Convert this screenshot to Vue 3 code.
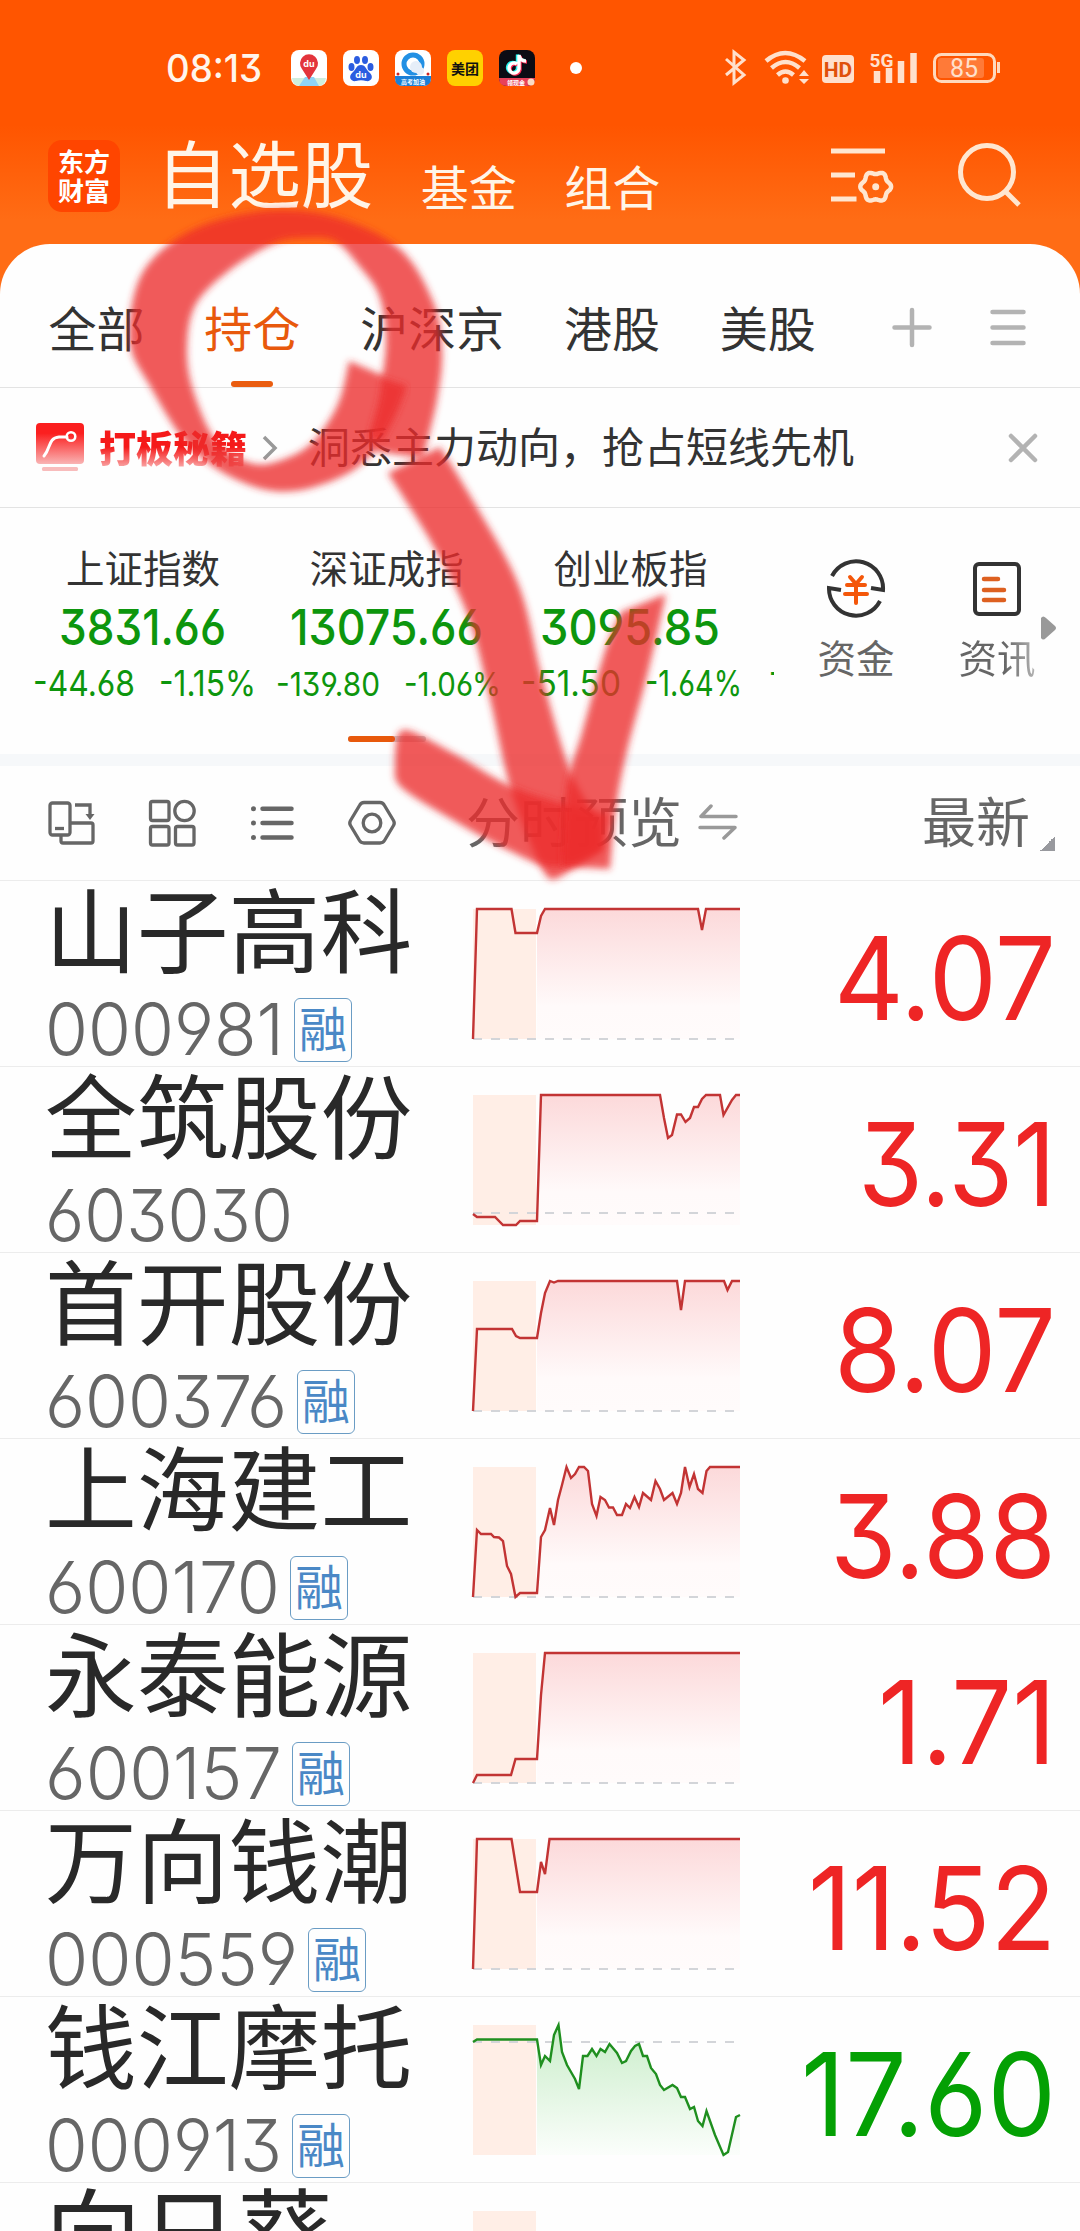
<template>
  <div class="page">
    <header class="header">
      <div class="status">
        <FitText class="clock" text="08:13" :width="96" :size="38" :weight="500" />
        <div class="apps">
          <svg viewBox="0 0 36 36">
            <rect width="36" height="36" rx="8" fill="#fff" />
            <path d="M1 28h34q-1 8-8 8H9q-7 0-8-8z" fill="#cfeedd" />
            <path d="M14 27h9l5 9H8z" fill="#8fd3f5" />
            <path d="M18 30 11 19a9 9 0 1 1 14 0z" fill="#e3343c" />
            <text x="18" y="17" class="du" fill="#fff">du</text>
          </svg>
          <svg viewBox="0 0 36 36">
            <rect width="36" height="36" rx="8" fill="#fff" />
            <g fill="#2b5ce0">
              <ellipse cx="8.500" cy="17" rx="3" ry="4" />
              <ellipse cx="14" cy="10" rx="3" ry="4" />
              <ellipse cx="22" cy="10" rx="3" ry="4" />
              <ellipse cx="27.500" cy="17" rx="3" ry="4" />
              <path d="M18 15c5 0 5 5 9 8 4 4 1 9-4 8-3-1-7-1-10 0-5 1-8-4-4-8 4-3 4-8 9-8z" />
            </g>
            <text x="18" y="28" class="du" fill="#fff">du</text>
          </svg>
          <svg viewBox="0 0 36 36">
            <rect width="36" height="36" rx="8" fill="#fff" />
            <path d="M0 26h36v2q0 8-8 8H8q-8 0-8-8z" fill="#1a7fd6" />
            <circle cx="18" cy="14" r="9" fill="none" stroke="#2290e4" stroke-width="5" />
            <circle cx="21" cy="17" r="6" fill="#e6eef8" />
            <circle cx="25" cy="21" r="4" fill="#e6eef8" />
            <circle cx="3" cy="24" r="1.500" fill="#c22" />
            <circle cx="33" cy="24" r="1.500" fill="#c22" />
            <text x="18" y="34" class="tiny">高考加油</text>
          </svg>
          <svg viewBox="0 0 36 36">
            <rect width="36" height="36" rx="8" fill="#ffd100" />
            <text x="18" y="23.500" class="meituan">美团</text>
          </svg>
          <svg viewBox="0 0 36 36">
            <rect width="36" height="36" rx="8" fill="#0c0c14" />
            <g fill="none" stroke-width="3.400">
              <path d="M18 14a5 5 0 1 0 2 5V5q1 6 7 6" stroke="#25f4ee" transform="translate(-1.500 -.5)" />
              <path d="M18 14a5 5 0 1 0 2 5V5q1 6 7 6" stroke="#fe2c55" transform="translate(1 1)" />
              <path d="M18 14a5 5 0 1 0 2 5V5q1 6 7 6" stroke="#fff" />
            </g>
            <path d="M0 28h36q0 8-8 8H8q-8 0-8-8z" fill="#e8415a" />
            <text x="17" y="34.500" class="tiny">领现金</text>
            <circle cx="32" cy="32" r="3.500" fill="#fbdcc4" />
          </svg>
        </div>
        <span class="dot"></span>
        <svg class="system" viewBox="725 50 276 36">
          <path d="m726 59 18 16-10 8V52l10 8-18 15" fill="none" stroke="#ffe0cc" stroke-width="3" />
          <g fill="none" stroke="#ffe0cc" stroke-width="4.500">
            <path d="M766 61q19-16 39 0M771.500 68q14-12 28 0M777.500 75q8-7 16 0" />
          </g>
          <circle cx="785.500" cy="80.500" r="3.300" fill="#ffe0cc" />
          <path d="m804 70 5 6h-10zm0 14 5-5h-10z" fill="#ffe0cc" />
          <rect x="822" y="55" width="32" height="28" rx="4" fill="#ffe0cc" />
          <text x="838" y="76.500" class="hd">HD</text>
          <text x="881.500" y="67" class="fiveg">5G</text>
          <path d="M877 71v12M889 68v15M901 61v22M913.500 53v30" stroke="#ffe0cc" stroke-width="6.500" />
          <rect x="934.500" y="54.500" width="60" height="27" rx="7" fill="none" stroke="#ffd9bd" stroke-width="3" />
          <rect x="938" y="58" width="46" height="20" rx="3" fill="#ff7a38" />
          <path d="M998.500 62v11" stroke="#ffd9bd" stroke-width="3" />
          <text x="964" y="77" class="battery">85</text>
        </svg>
      </div>
      <nav class="top">
        <div class="logo"><span>东方</span><span>财富</span></div>
        <h1>自选股</h1>
        <span class="link">基金</span>
        <span class="link">组合</span>
        <svg class="tools" viewBox="831 144 190 66" fill="none" stroke="#ffe6d0" stroke-width="5">
          <path d="M831 152h54M831 176h24M831 200h25.500" />
          <path :d="gear" stroke-width="4.500" stroke-linejoin="round" />
          <circle cx="875.700" cy="187.700" r="3.500" fill="#ffe6d0" stroke="none" />
          <circle cx="987" cy="173" r="26.500" />
          <path d="m1005 192 14 14" />
        </svg>
      </nav>
    </header>

    <main class="sheet">
      <nav class="tabs">
        <span v-for="tab in tabs" :key="tab" :class="{ active: tab === '持仓' }">{{ tab }}</span>
        <svg class="tab-tools" viewBox="892 307 136 41" stroke="#b3b3b3" stroke-width="4.500" stroke-linecap="round">
          <path d="M894.500 327.500h35M912 310v35M992.500 312h31M992.500 327.500h31M992.500 343h31" />
        </svg>
      </nav>

      <section class="notice">
        <svg class="promo" viewBox="0 0 48 50">
          <defs>
            <linearGradient id="promo" x2="0" y2="1">
              <stop offset=".25" stop-color="#fb1f1f" />
              <stop offset="1" stop-color="#f9b4b4" />
            </linearGradient>
          </defs>
          <rect width="48" height="41" rx="4" fill="url(#promo)" />
          <path d="M8 33c7-8 4-18 15-19h8" fill="none" stroke="#fff" stroke-width="3" stroke-linecap="round" />
          <circle cx="35" cy="13.500" r="4.300" fill="none" stroke="#fff" stroke-width="2.500" />
          <rect x="6" y="44" width="36" height="4" rx="1.500" fill="#f8bcbc" />
        </svg>
        <b>打板秘籍</b>
        <svg class="chevron" viewBox="0 0 16 28"><path d="m2 3 11 11L2 25" fill="none" stroke="#999" stroke-width="3.500" /></svg>
        <span>洞悉主力动向，抢占短线先机</span>
        <svg class="close" viewBox="0 0 30 30"><path d="m3 3 24 24M27 3 3 27" stroke="#b3b3b3" stroke-width="4.500" stroke-linecap="round" /></svg>
      </section>

      <section class="market">
        <div class="indices">
          <div v-for="item in indices" :key="item.name" class="index">
            <span>{{ item.name }}</span>
            <FitText :text="item.value" :width="item.width" :size="50" :weight="550" />
            <div class="change">
              <FitText :text="item.diff" :width="item.diffWidth" :size="item.size" />
              <FitText :text="item.rate" :width="97" :size="item.size" />
            </div>
          </div>
          <i class="more">-</i>
        </div>
        <div class="shortcuts">
          <div class="shortcut">
            <svg viewBox="0 0 60 60" fill="none" stroke="#333" stroke-width="4">
              <path d="M6 17a27 27 0 0 1 51 14l-12-2M54 42A27 27 0 0 1 3 29l12 2" />
              <path d="m24 18 6 7 6-7M21 26h18M19 35h22M30 26v18" stroke="#f4570a" stroke-linecap="round" />
            </svg>
            <span>资金</span>
          </div>
          <div class="shortcut">
            <svg viewBox="0 0 60 60" fill="none" stroke="#333" stroke-width="4">
              <rect x="8" y="5" width="44" height="50" rx="4" />
              <path d="M17 20h14M17 31h20M17 41h20" stroke="#dd6020" stroke-width="4.500" stroke-linecap="round" />
            </svg>
            <span class="fade">资讯</span>
          </div>
        </div>
        <svg class="next" viewBox="0 0 15 24"><path d="M0 2q2-3 5 0l9 8q2 2 0 4l-9 8q-3 3-5 0z" fill="#999" /></svg>
        <div class="pager"><i></i></div>
      </section>

      <section class="toolbar">
        <svg class="views" viewBox="47 799 350 49" fill="none" stroke="#666" stroke-width="3.300">
          <path d="M61 836v5q0 2 2 2h28q2 0 2-2v-16q0-2-2-2H71M75 805h15v10" />
          <rect x="50" y="803" width="20" height="32" rx="2.500" />
          <path d="M55 828.500h9" />
          <path d="m85.500 814 9 0-4.500 6z" fill="#666" stroke="none" />
          <rect x="150.500" y="801.500" width="18.500" height="19" rx="2" />
          <circle cx="184.500" cy="811" r="9.700" />
          <rect x="150.500" y="826.500" width="18.500" height="18.500" rx="2" />
          <rect x="175.500" y="826.500" width="18.500" height="18.500" rx="2" />
          <path d="M262.500 808.700h29M262.500 823h29M262.500 837.500h29" stroke-width="4.500" stroke-linecap="round" />
          <path d="M253.500 808.700h.01M253.500 823h.01M253.500 837.500h.01" stroke-width="5" stroke-linecap="round" />
          <path d="M364 802.500h16q3 0 4.500 3l9 15q1.500 2.500 0 5l-9 15q-1.500 2.500-4.500 2.500h-16q-3 0-4.500-2.500l-9-15q-1.500-2.500 0-5l9-15q1.500-3 4.500-3z" />
          <circle cx="372" cy="823" r="8.800" />
        </svg>
        <span class="preview">分时预览</span>
        <svg class="swap" viewBox="0 0 40 36"><path d="M13 2 3 12.500h35M2 23.500h35L26 34" fill="none" stroke="#999" stroke-width="3.500" stroke-linecap="round" stroke-linejoin="round" /></svg>
        <span class="latest">最新</span>
        <i class="corner"></i>
      </section>

      <section class="stocks">
        <article v-for="stock in stocks" :key="stock.name" class="stock">
          <div class="info">
            <h2 :class="{ short: stock.name.length < 4 }">{{ stock.name }}</h2>
            <div v-if="stock.code" class="code">
              <FitText :text="stock.code" :width="stock.codeWidth" :size="72" :weight="320" />
              <em v-if="stock.margin">融</em>
            </div>
          </div>
          <svg class="chart" :class="{ down: stock.down }" viewBox="0 0 267 130">
            <defs>
              <linearGradient id="up" gradientUnits="userSpaceOnUse" x1="0" y1="0" x2="0" y2="130">
                <stop offset="0" stop-color="#fcd9da" />
                <stop offset=".75" stop-color="#fffafa" />
                <stop offset="1" stop-color="#fffbfb" />
              </linearGradient>
              <linearGradient id="down" gradientUnits="userSpaceOnUse" x1="0" y1="0" x2="0" y2="130">
                <stop offset="0" stop-color="#c9edc9" />
                <stop offset="1" stop-color="#fbfefb" />
              </linearGradient>
            </defs>
            <rect width="63" height="130" fill="#ffeee6" />
            <template v-if="stock.line">
              <path :d="area(stock.line)" :fill="stock.down ? 'url(#down)' : 'url(#up)'" />
              <path :d="`M0 ${stock.base}H261`" stroke="#d3d5d9" stroke-width="2" stroke-dasharray="9 9" />
              <polyline :points="stock.line" />
            </template>
          </svg>
          <FitText
            v-if="stock.price"
            class="price"
            :class="{ down: stock.down }"
            :text="stock.price"
            :width="stock.priceWidth"
            :size="115"
            :weight="380"
          />
        </article>
      </section>
    </main>

    <svg class="marks" viewBox="0 0 1080 2231">
      <defs>
        <filter id="soft" x="-10%" y="-10%" width="120%" height="120%"><feGaussianBlur stdDeviation="3.500" /></filter>
      </defs>
      <path v-for="mark in marks" :key="mark" :d="mark" filter="url(#soft)" />
    </svg>
  </div>
</template>

<script setup>
import { h } from 'vue'

// digits squeezed to a given width
const FitText = ({ text, width, size, weight = 400 }) =>
  h('svg', { width, height: size, viewBox: `0 0 ${width} ${size}`, overflow: 'visible' }, [
    h('text', {
      x: 0,
      y: size * 0.86,
      textLength: width,
      lengthAdjust: 'spacingAndGlyphs',
      fill: 'currentColor',
      'font-family': 'Inter, "Noto Sans", sans-serif',
      'font-size': size,
      'font-weight': weight
    }, text)
  ])
FitText.props = ['text', 'width', 'size', 'weight']

const tabs = ['全部', '持仓', '沪深京', '港股', '美股']

const indices = [
  { name: '上证指数', value: '3831.66', width: 167, diff: '-44.68', diffWidth: 102, rate: '-1.15%', size: 36 },
  { name: '深证成指', value: '13075.66', width: 193, diff: '-139.80', diffWidth: 104, rate: '-1.06%', size: 33 },
  { name: '创业板指', value: '3095.85', width: 180, diff: '-51.50', diffWidth: 100, rate: '-1.64%', size: 36 }
]

const stocks = [
  {
    name: '山子高科', code: '000981', codeWidth: 239, margin: true, price: '4.07', priceWidth: 222, base: 130,
    line: '0,130 4,0 38.5,0 42.5,24 64,24 68,7 72,0 225,0 229,21 233,0 267,0'
  },
  {
    name: '全筑股份', code: '603030', codeWidth: 248, price: '3.31', priceWidth: 198, base: 118,
    line: '0,119 4,122 22,122 30,130 43,130 47,126 64,126 68,0 187,0 191,23 195,43 199,40 204,19.5 208,19.5 212.5,27 217,23 221,12 225,12 229,4 233,0 247,0 250.5,20 259,5 263,0 267,0'
  },
  {
    name: '首开股份', code: '600376', codeWidth: 242, margin: true, price: '8.07', priceWidth: 222, base: 130,
    line: '0,130 4,48 39,48 43,55 47,57 64,57 68,32 72,12 77,0 81,1.5 85,0 204,0 208,29 212,0 251,0 254.5,9 259,0 267,0'
  },
  {
    name: '上海建工', code: '600170', codeWidth: 235, margin: true, price: '3.88', priceWidth: 226, base: 130,
    line: '0,130 4,63 8,67 18,67 21,70 26,70.5 30,74 34,99 38,107 42.5,130 47,126 64,126 68,70 72,63 77,41 81,58 85,33 89,18 93.5,0 98,11 102,7 106,0 111,0 115,4 119,37 123.5,49 127.5,30 132,33 136,40.5 140,40.5 144,48 149,48 153,37 157,41 161.5,30 166,40 170,26 178,33 182.5,14 187,22 191,33 199.5,26 204,37 208,26 212,0 216.5,20 221,7 225,22 229.5,26 233.5,4 237,0 267,0'
  },
  {
    name: '永泰能源', code: '600157', codeWidth: 237, margin: true, price: '1.71', priceWidth: 178, base: 130,
    line: '0,130 4,122 38,122 42.5,106 64,106 68,42 72,0 267,0'
  },
  {
    name: '万向钱潮', code: '000559', codeWidth: 253, margin: true, price: '11.52', priceWidth: 248, base: 130,
    line: '0,130 4,0 38.5,0 47,53 64,53 68,23 72,35 76.5,0 267,0'
  },
  {
    name: '钱江摩托', code: '000913', codeWidth: 237, margin: true, price: '17.60', priceWidth: 255, base: 17, down: true,
    line: '0,17 4,14.5 64,14.5 68,40 72,31 77,36 81,10 85.5,0 89,27 94,40 102,54 106,64 110,31 114.5,31 119,24 123.5,31 127.5,24 132,27 136.5,19 144,28 149,38 153,36 158,26 162,21 166,19 170,31 174,31 178,43 183,49 187,60 191,65 199.5,60 204,63 208,72 212,72 217,84 221,82 225,96 229.5,101 233.5,86 242,110 250.5,130 255,127 263,92 267,90'
  },
  { name: '向日葵' }
]

// the fill only covers the trading session, right of the auction band
function area(line) {
  const points = line.split(' ').filter((p) => parseFloat(p) >= 64)
  return `M64 130L${points.join(' ')} 267,130Z`
}

// six-lobed outline
const gear = (() => {
  const points = []
  for (let i = 0; i < 72; i++) {
    const a = (i / 72) * Math.PI * 2
    const r = 14 + Math.cos(a * 6) * 1.4
    points.push(`${(875.7 + r * Math.cos(a)).toFixed(1)} ${(187.7 + r * Math.sin(a)).toFixed(1)}`)
  }
  return `M${points.join('L')}Z`
})()

function curve(p) {
  let d = ''
  for (let i = 0; i < p.length - 1; i++) {
    const a = p[i - 1] || p[i]
    const b = p[i]
    const c = p[i + 1]
    const e = p[i + 2] || c
    d += `C${b[0] + (c[0] - a[0]) / 6} ${b[1] + (c[1] - a[1]) / 6} ${c[0] - (e[0] - b[0]) / 6} ${c[1] - (e[1] - b[1]) / 6} ${c[0]} ${c[1]}`
  }
  return d
}

// a brush stroke between two edges
function brush(left, right) {
  const back = [...right].reverse()
  return `M${left[0]}${curve(left)}L${back[0]}${curve(back)}Z`
}

const marks = [
  brush(
    [[407, 386], [386, 434], [352, 471], [294, 491], [242, 482], [190, 447], [150, 386], [130, 343], [137, 285], [164, 248], [212, 222], [279, 210], [342, 219], [401, 250], [434, 304], [442, 352], [437, 400], [423, 458]],
    [[349, 361], [338, 404], [312, 443], [279, 461], [250, 463], [216, 441], [193, 390], [187, 347], [196, 304], [231, 269], [275, 243], [305, 238], [335, 241], [360, 267], [379, 295], [386, 339], [380, 390], [366, 450]]
  ),
  brush([[382, 378], [379, 400], [368, 440]], [[407, 386], [397, 412], [383, 440]]),
  brush(
    [[388, 473], [434, 547], [468, 616], [490, 699], [512, 794], [544, 872], [560, 877]],
    [[440, 447], [475, 504], [519, 586], [542, 677], [570, 770], [598, 822], [602, 850]]
  ),
  brush(
    [[395, 755], [404, 730], [453, 753], [508, 785], [560, 803], [608, 815]],
    [[395, 765], [401, 787], [453, 820], [508, 850], [555, 867], [602, 850]]
  ),
  brush(
    [[621, 612], [605, 651], [582, 733], [567, 785], [562, 866]],
    [[666, 594], [649, 668], [627, 751], [616, 807], [610, 869]]
  )
]
</script>

<style>
body {
  margin: 0;
}
</style>

<style scoped>
.page {
  position: relative;
  width: 1080px;
  height: 2231px;
  overflow: hidden;
  background: #fefefe;
  color: #333;
  font-family: 'Noto Sans CJK SC', 'Noto Sans', sans-serif;
  font-feature-settings: 'cv03', 'cv04', 'cv09';
}
svg {
  display: block;
  flex: none;
}
.header {
  box-sizing: border-box;
  height: 300px;
  background: linear-gradient(#ff5500 125px, #ff6c15 220px);
  color: #fff5e8;
}
.status {
  display: flex;
  align-items: center;
  box-sizing: border-box;
  height: 136px;
  padding-left: 166px;
}
.clock {
  color: #fff5ec;
}
.apps {
  display: flex;
  gap: 16px;
  margin-left: 29px;
}
.apps svg {
  width: 36px;
  height: 36px;
}
.du {
  font: bold 9px Inter, sans-serif;
  text-anchor: middle;
}
.meituan {
  font: bold 14px 'Noto Sans CJK SC', sans-serif;
  text-anchor: middle;
  fill: #111;
}
.tiny {
  font: bold 6px 'Noto Sans CJK SC', sans-serif;
  text-anchor: middle;
  fill: #fff;
}
.dot {
  width: 12px;
  height: 12px;
  margin-left: 35px;
  border-radius: 50%;
  background: #fff;
}
.system {
  width: 276px;
  height: 36px;
  margin-left: 143px;
  overflow: visible;
}
.hd,
.fiveg,
.battery {
  font-family: Roboto, sans-serif;
  text-anchor: middle;
  fill: #ffe0cc;
}
.hd {
  font-size: 21px;
  font-weight: bold;
  fill: #e0500a;
}
.fiveg {
  font-size: 19px;
  font-weight: bold;
}
.battery {
  font-size: 25px;
}
.top {
  display: flex;
  align-items: center;
  height: 80px;
  padding-left: 48px;
  white-space: nowrap;
}
.logo {
  display: flex;
  flex-direction: column;
  justify-content: center;
  align-items: center;
  width: 72px;
  height: 72px;
  border-radius: 14px;
  background: #ff4500;
  color: #fff;
  font-size: 26px;
  font-weight: bold;
  line-height: 31px;
}
.logo span {
  margin-top: -2px;
}
.top h1 {
  margin: -10px 0 0 36px;
  font-size: 72.4px;
  font-weight: 400;
  line-height: 72px;
}
.link {
  margin: 17px 0 0 47.5px;
  font-size: 48px;
  line-height: 48px;
}
.tools {
  width: 190px;
  height: 66px;
  margin-left: 171px;
}
.sheet {
  position: relative;
  margin-top: -56px;
  border-radius: 50px 50px 0 0;
  background: #fefefe;
}
.tabs {
  display: flex;
  align-items: center;
  gap: 59.8px;
  box-sizing: border-box;
  height: 144px;
  padding: 0 52px 0 48.5px;
  border-bottom: 1px solid #e3e3e3;
  font-size: 48px;
}
.tabs span {
  display: flex;
  align-items: center;
  height: 142px;
  margin-top: 21px;
  line-height: 48px;
}
.tabs .active {
  position: relative;
  color: #e8590c;
}
.active::after {
  content: '';
  position: absolute;
  left: 27px;
  bottom: 10px;
  width: 42px;
  height: 6px;
  border-radius: 3px;
  background: #ea5d10;
}
.tab-tools {
  width: 136px;
  height: 41px;
  margin: 24px 0 0 auto;
}
.notice {
  display: flex;
  align-items: center;
  box-sizing: border-box;
  height: 120px;
  padding: 0 42px 0 36px;
  border-bottom: 1px solid #e3e3e3;
  font-size: 42px;
}
.promo {
  width: 48px;
  height: 50px;
}
.notice b {
  margin: -2px 15px 0;
  background: linear-gradient(#f51a1a 50%, #f9a5a5 92%);
  background-clip: text;
  color: transparent;
  font-size: 37px;
  font-weight: 900;
  line-height: 48px;
}
.notice span {
  margin: -6px 0 0 30px;
  line-height: 42px;
}
.chevron {
  width: 16px;
  height: 28px;
}
.close {
  width: 30px;
  height: 30px;
  margin-left: auto;
}
.market {
  position: relative;
  display: flex;
  box-sizing: border-box;
  height: 258px;
  border-bottom: 12px solid #f6f8fa;
}
.indices {
  display: flex;
  width: 753px;
  padding-left: 21px;
  overflow: hidden;
}
.index {
  display: flex;
  flex: none;
  flex-direction: column;
  align-items: center;
  width: 243.8px;
  padding-top: 38px;
  color: #0d960d;
}
.index span {
  margin-bottom: 16px;
  color: #333;
  font-size: 38.5px;
  line-height: 40px;
}
.change {
  display: flex;
  align-items: flex-end;
  gap: 24px;
  height: 36px;
  margin: 13px 0 0 3px;
}
.more {
  flex: none;
  margin: 142px 0 0 16px;
  color: #0d960d;
  font: 36px Inter, sans-serif;
}
.shortcuts {
  display: flex;
  gap: 53px;
  padding: 51px 0 0 38px;
}
.shortcut {
  display: flex;
  flex-direction: column;
  align-items: center;
  gap: 15px;
  width: 88px;
  color: #666;
  font-size: 38.5px;
  line-height: 44px;
}
.shortcut svg {
  width: 60px;
  height: 60px;
}
.fade {
  background: linear-gradient(90deg, #666 60%, #b5b5b5);
  background-clip: text;
  color: transparent;
}
.next {
  position: absolute;
  left: 1041px;
  top: 108px;
  width: 15px;
  height: 24px;
}
.pager {
  position: absolute;
  left: 348px;
  top: 228px;
  width: 78px;
  height: 6px;
  border-radius: 3px;
  background: #ccc;
}
.pager i {
  display: block;
  width: 47px;
  height: 6px;
  border-radius: 3px;
  background: #e8590c;
}
.toolbar {
  display: flex;
  align-items: center;
  box-sizing: border-box;
  height: 115px;
  padding: 0 25px 0 47px;
  border-bottom: 1px solid #ececec;
  color: #666;
  font-size: 54px;
  line-height: 54px;
}
.views {
  width: 350px;
  height: 49px;
}
.preview {
  margin: -7px 0 0 69px;
}
.swap {
  width: 40px;
  height: 36px;
  margin: -2px 0 0 16px;
}
.latest {
  margin: -7px 10px 0 auto;
}
.corner {
  width: 15px;
  height: 15px;
  margin-top: 41px;
  background: linear-gradient(135deg, transparent 50%, #98999e 50%);
}
.stock {
  display: flex;
  box-sizing: border-box;
  height: 186px;
  border-bottom: 1px solid #ececec;
}
.info {
  width: 427px;
  padding-left: 45px;
}
.info h2 {
  margin: 0;
  color: #292929;
  font-size: 91.8px;
  font-weight: 400;
  line-height: 90px;
  white-space: nowrap;
}
.info .short {
  font-size: 96px;
}
.code {
  display: flex;
  align-items: center;
  gap: 10px;
  margin-top: 22px;
  color: #666;
}
.code em {
  box-sizing: border-box;
  width: 58px;
  height: 64px;
  margin-top: 1px;
  border: 1.5px solid #6a9cc4;
  border-radius: 6px;
  color: #4a88c6;
  font-size: 48px;
  font-style: normal;
  line-height: 55px;
  text-align: center;
}
.chart {
  width: 267px;
  height: 130px;
  margin: 28px 0 0 1px;
  overflow: visible;
}
.chart polyline {
  fill: none;
  stroke: #c23434;
  stroke-width: 2.4;
}
.chart.down polyline {
  stroke: #1f8f1f;
}
.price {
  margin: 40px 24px 0 auto;
  color: #ee2525;
}
.price.down {
  color: #04a004;
}
.marks {
  position: absolute;
  inset: 0;
  width: 1080px;
  height: 2231px;
  fill: rgba(236, 42, 46, 0.78);
  pointer-events: none;
}
</style>
